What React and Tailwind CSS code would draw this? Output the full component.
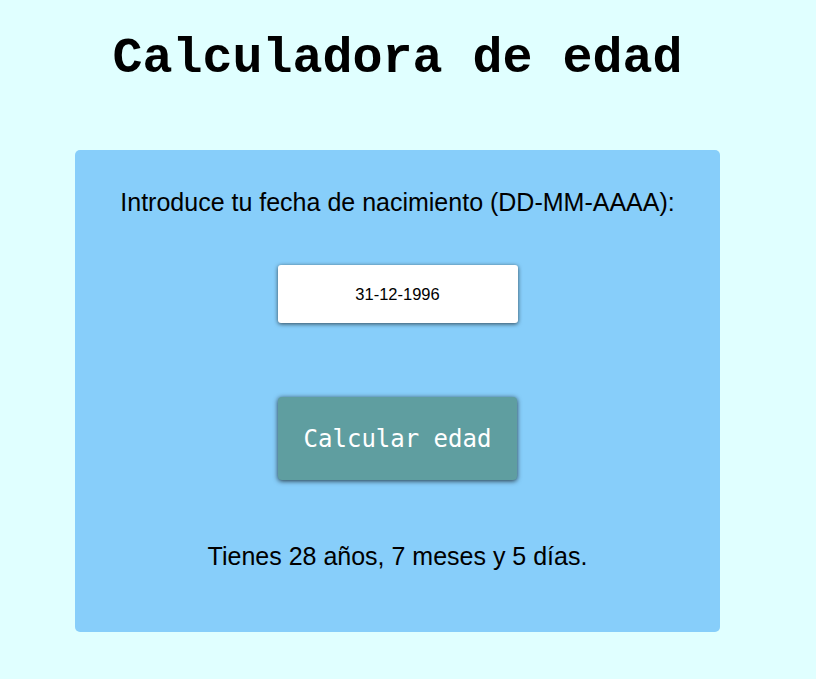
import React, { useState } from 'react';

const App = () => {
    const [fecha, setFecha] = useState('31-12-1996');
    const [resultado, setResultado] = useState('Tienes 28 años, 7 meses y 5 días.');

    const calcular = () => {
        const partes = fecha.split('-').map(Number);
        if (partes.length !== 3 || partes.some(isNaN)) {
            setResultado('Fecha no válida.');
            return;
        }
        const [d, m, a] = partes;
        const hoy = new Date(2025, 7, 5);
        let anos = hoy.getFullYear() - a;
        let meses = hoy.getMonth() + 1 - m;
        let dias = hoy.getDate() - d;
        if (dias < 0) {
            meses -= 1;
            dias += new Date(hoy.getFullYear(), hoy.getMonth(), 0).getDate();
        }
        if (meses < 0) {
            anos -= 1;
            meses += 12;
        }
        setResultado(`Tienes ${anos} años, ${meses} meses y ${dias} días.`);
    };

    return (
        <div className="min-h-[679px] w-full bg-[#e0ffff]">
            <div className="w-[795px] flex flex-col items-center pt-[31px]">
                {/* Title */}
                <h1 className="font-['Liberation_Mono','Courier_New',monospace] font-bold text-[50px] leading-[56px] text-black">
                    Calculadora de edad
                </h1>

                {/* Card */}
                <div className="mt-[63px] w-[645px] h-[482px] bg-[#87cefa] rounded-[5px] flex flex-col items-center pt-[37px] font-['Liberation_Sans',Arial,sans-serif] text-black">
                    <p className="text-[25px] leading-[30px]">
                        Introduce tu fecha de nacimiento (DD-MM-AAAA):
                    </p>

                    <input
                        type="text"
                        value={fecha}
                        onChange={(e) => setFecha(e.target.value)}
                        className="mt-[48px] w-[240px] h-[58px] bg-white rounded-[3px] text-center text-[16.5px] text-black shadow-[0_1px_4px_rgba(0,0,0,0.65)] outline-none"
                    />

                    <button
                        onClick={calcular}
                        className="mt-[74px] w-[239px] h-[83px] bg-[#5f9ea0] rounded-[4px] text-white text-[24px] font-['DejaVu_Sans_Mono',Consolas,monospace] shadow-[0_1px_5px_rgba(0,0,0,0.75)]"
                    >
                        Calcular edad
                    </button>

                    <p className="mt-[61px] text-[25px] leading-[30px]">
                        {resultado}
                    </p>
                </div>
            </div>
        </div>
    );
};

export default App;
